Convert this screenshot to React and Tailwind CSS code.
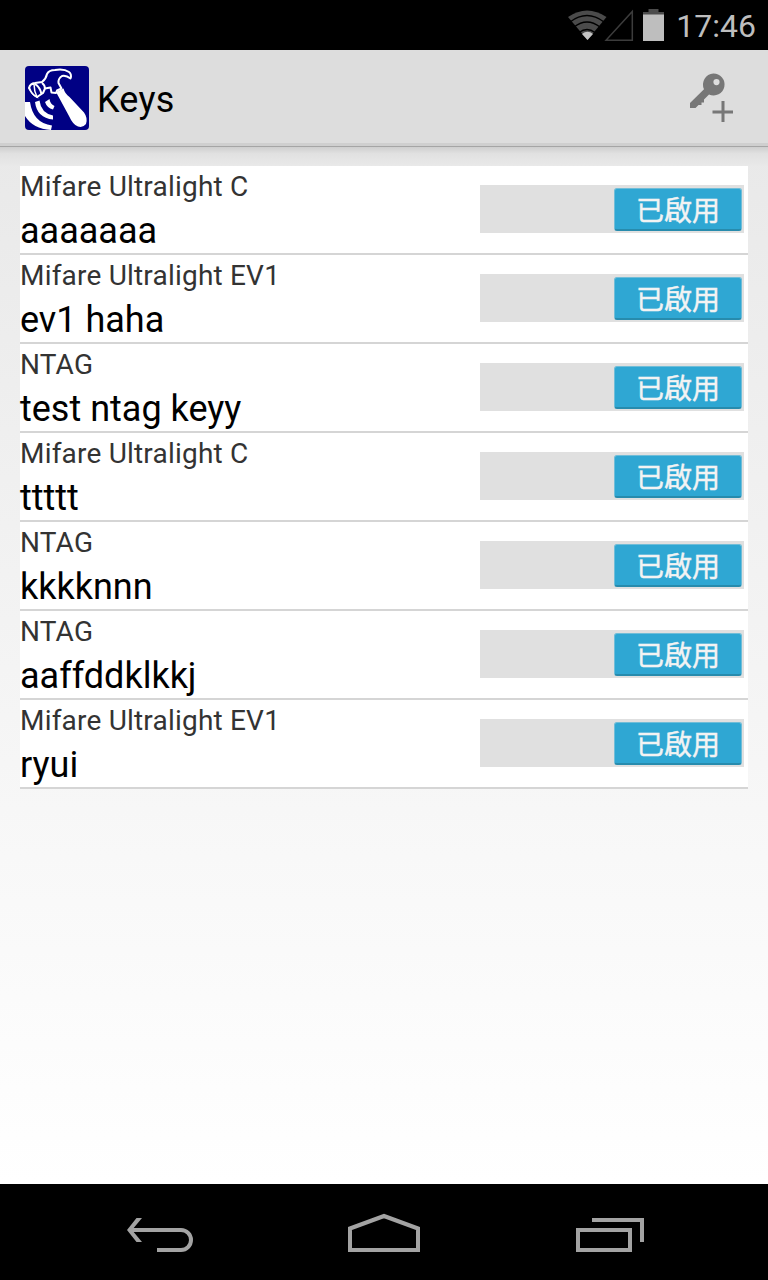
const keys = [
  { type: "Mifare Ultralight C", name: "aaaaaaa" },
  { type: "Mifare Ultralight EV1", name: "ev1 haha" },
  { type: "NTAG", name: "test ntag keyy" },
  { type: "Mifare Ultralight C", name: "ttttt" },
  { type: "NTAG", name: "kkkknnn" },
  { type: "NTAG", name: "aaffddklkkj" },
  { type: "Mifare Ultralight EV1", name: "ryui" },
];

function StatusBar() {
  return (
    <div className="h-[50px] bg-black flex items-center justify-end pr-3 pb-px text-[#bebebe]">
      {/* Wifi */}
      <svg className="w-10 h-8" viewBox="0 0 40 32" fill="none">
        <path d="M20.500 31L1 8Q20-5 39.500 8Z" fill="#4b4b4b" />
        <path d="M3 13Q20 0 37 13M7 18Q20 8 33 18M12 23.500Q20 17.500 28 23.500" stroke="#000" strokeWidth="1.4" />
        <path d="M20.500 31L15 25Q20.500 20.500 26 25Z" fill="#c4c4c4" />
      </svg>
      {/* Signal */}
      <svg className="w-[30px] h-8 -ml-[3px]" viewBox="0 0 30 32" fill="none">
        <path d="M2 31.300H28.300V2.500Z" stroke="#3c3c3c" strokeWidth="1.500" />
      </svg>
      {/* Battery */}
      <svg className="w-[21px] h-8 ml-[9px]" viewBox="0 0 21 32">
        <path d="M0 3H5.500V0H15.500V3H21V6H0Z" fill="#4b4b4b" />
        <path d="M0 5.500H21V32H0Z" fill="#bebebe" />
      </svg>
      <span className="ml-3 pt-[3px] text-[32px] leading-[47px]">17:46</span>
    </div>
  );
}

function AppLogo() {
  return (
    <svg className="w-16 h-16" viewBox="0 0 64 64">
      <rect width="64" height="64" rx="4" fill="#000084" />
      {/* Hammer */}
      <path
        d="M4 22Q5 17.500 10 17L17 16Q21 13 22 8Q24 4 30 4Q39 2.500 44 6Q47 8.500 45.500 12.500Q41 9 37 10Q33 12.500 33.500 17L36.500 22.500L32 24.500L31 27L26.500 26.500L25.500 21.500L20 22.500L18 27L12 31Q7 28 4 22Z"
        fill="none"
        stroke="#fff"
        strokeWidth="2"
        strokeLinejoin="round"
      />
      <path d="M4.500 22Q7 29 12 31Q9 25 9 18Q5 18 4.500 22Z" fill="#000084" stroke="#fff" strokeWidth="1.5" />
      <path d="M10 18Q15 21 16.500 28M17 17Q20 19 20 23" fill="none" stroke="#fff" strokeWidth="2" />
      <path d="M31 26L38.500 22.500Q40 28 44.500 31L59 46.500Q63 52 61 58Q58 62 53 60.500Q48 59 44 50Z" fill="#fff" />
      {/* Waves */}
      <path d="M0 36H5Q8 57 27 59.500L26 64Q8 63 0 50Z" fill="#fff" />
      <path d="M10 36L14.500 34.500Q16 47 28 49.500V53.500Q12 52 10 36Z" fill="#fff" />
      <path d="M20 36L24.500 33Q25 38 29.500 40L28 43.500Q22 42 20 36Z" fill="#fff" />
    </svg>
  );
}

function AddKeyIcon() {
  return (
    <svg className="w-12 h-[52px]" viewBox="0 0 48 52" fill="#777">
      <path
        fillRule="evenodd"
        d="M26.300 1.500A11 11 0 1 1 22 22.500L17 27.500V30.500H14.500V33H11.500L8.500 36H3V31L17 17.200A11 11 0 0 1 26.300 1.500ZM29.500 7A3.100 3.100 0 1 0 29.500 13.200A3.100 3.100 0 1 0 29.500 7Z"
      />
      <path d="M34.500 29H37.500V38.500H46V41.500H37.500V50H34.500V41.500H25.500V38.500H34.500Z" />
    </svg>
  );
}

function ActionBar() {
  return (
    <header className="h-24 bg-[#ddd] border-b-[3px] border-[#cfcfcf] flex items-center pl-[25px] pr-[33px] pt-[3px]">
      <AppLogo />
      <h1 className="ml-2 pt-1 text-4xl tracking-[0.2px] flex-1">Keys</h1>
      <AddKeyIcon />
    </header>
  );
}

function Switch({ label }) {
  return (
    <button className="w-[264px] h-12 mt-[18px] self-start bg-[#e0e0e0] flex justify-end pt-[3px] pr-0.5 mb-auto translate-y-px">
      <span className="w-32 h-[43px] rounded-[3px] bg-[#2fa7d3] border border-[#70bdd8] border-b-2 border-b-[#278bad] text-[#f3f3f3] text-[28px] leading-[46px] text-center [-webkit-text-stroke:0.4px]">
        {label}
      </span>
    </button>
  );
}

function KeyRow({ type, name }) {
  return (
    <li className="h-[89px] bg-white border-b-2 border-[#d5d5d5] flex justify-between pr-1">
      <div className="pt-0.5">
        <p className="text-[28px] leading-[38px] tracking-[0.2px] text-[#333]">{type}</p>
        <p className="text-4xl leading-[51px]">{name}</p>
      </div>
      <Switch label="已啟用" />
    </li>
  );
}

function NavBar() {
  return (
    <nav className="h-24 bg-black">
      <svg className="w-full h-full" viewBox="0 0 768 96" fill="none" stroke="#a3a3a3" strokeWidth="4">
        {/* Back */}
        <path d="M130 46H181A10 10 0 0 1 181 66H157" />
        <path d="M136.500 34H142L132 46L142 58H136.500L127 46Z" fill="#a3a3a3" stroke="none" />
        {/* Home */}
        <path d="M350 44.500L384 32L418 44.500V66H350Z" />
        {/* Recents */}
        <path d="M578 46H630V66H578ZM592 36H642V58" />
      </svg>
    </nav>
  );
}

export default function App() {
  return (
    <div className="w-[768px] h-[1280px] flex flex-col overflow-hidden text-black font-['Roboto','Noto_Sans_CJK_TC',sans-serif]">
      <StatusBar />
      <ActionBar />
      <main className="flex-1 bg-linear-to-b from-[#e9e9e9] to-white">
        <div className="h-5 border-t border-[#a5a5a5] bg-linear-to-b from-[#cecece] via-[#e1e1e1] via-35% to-[#e9e9e9]" />
        <ul className="mx-5">
          {keys.map((item) => (
            <KeyRow key={item.name} type={item.type} name={item.name} />
          ))}
        </ul>
      </main>
      <NavBar />
    </div>
  );
}
